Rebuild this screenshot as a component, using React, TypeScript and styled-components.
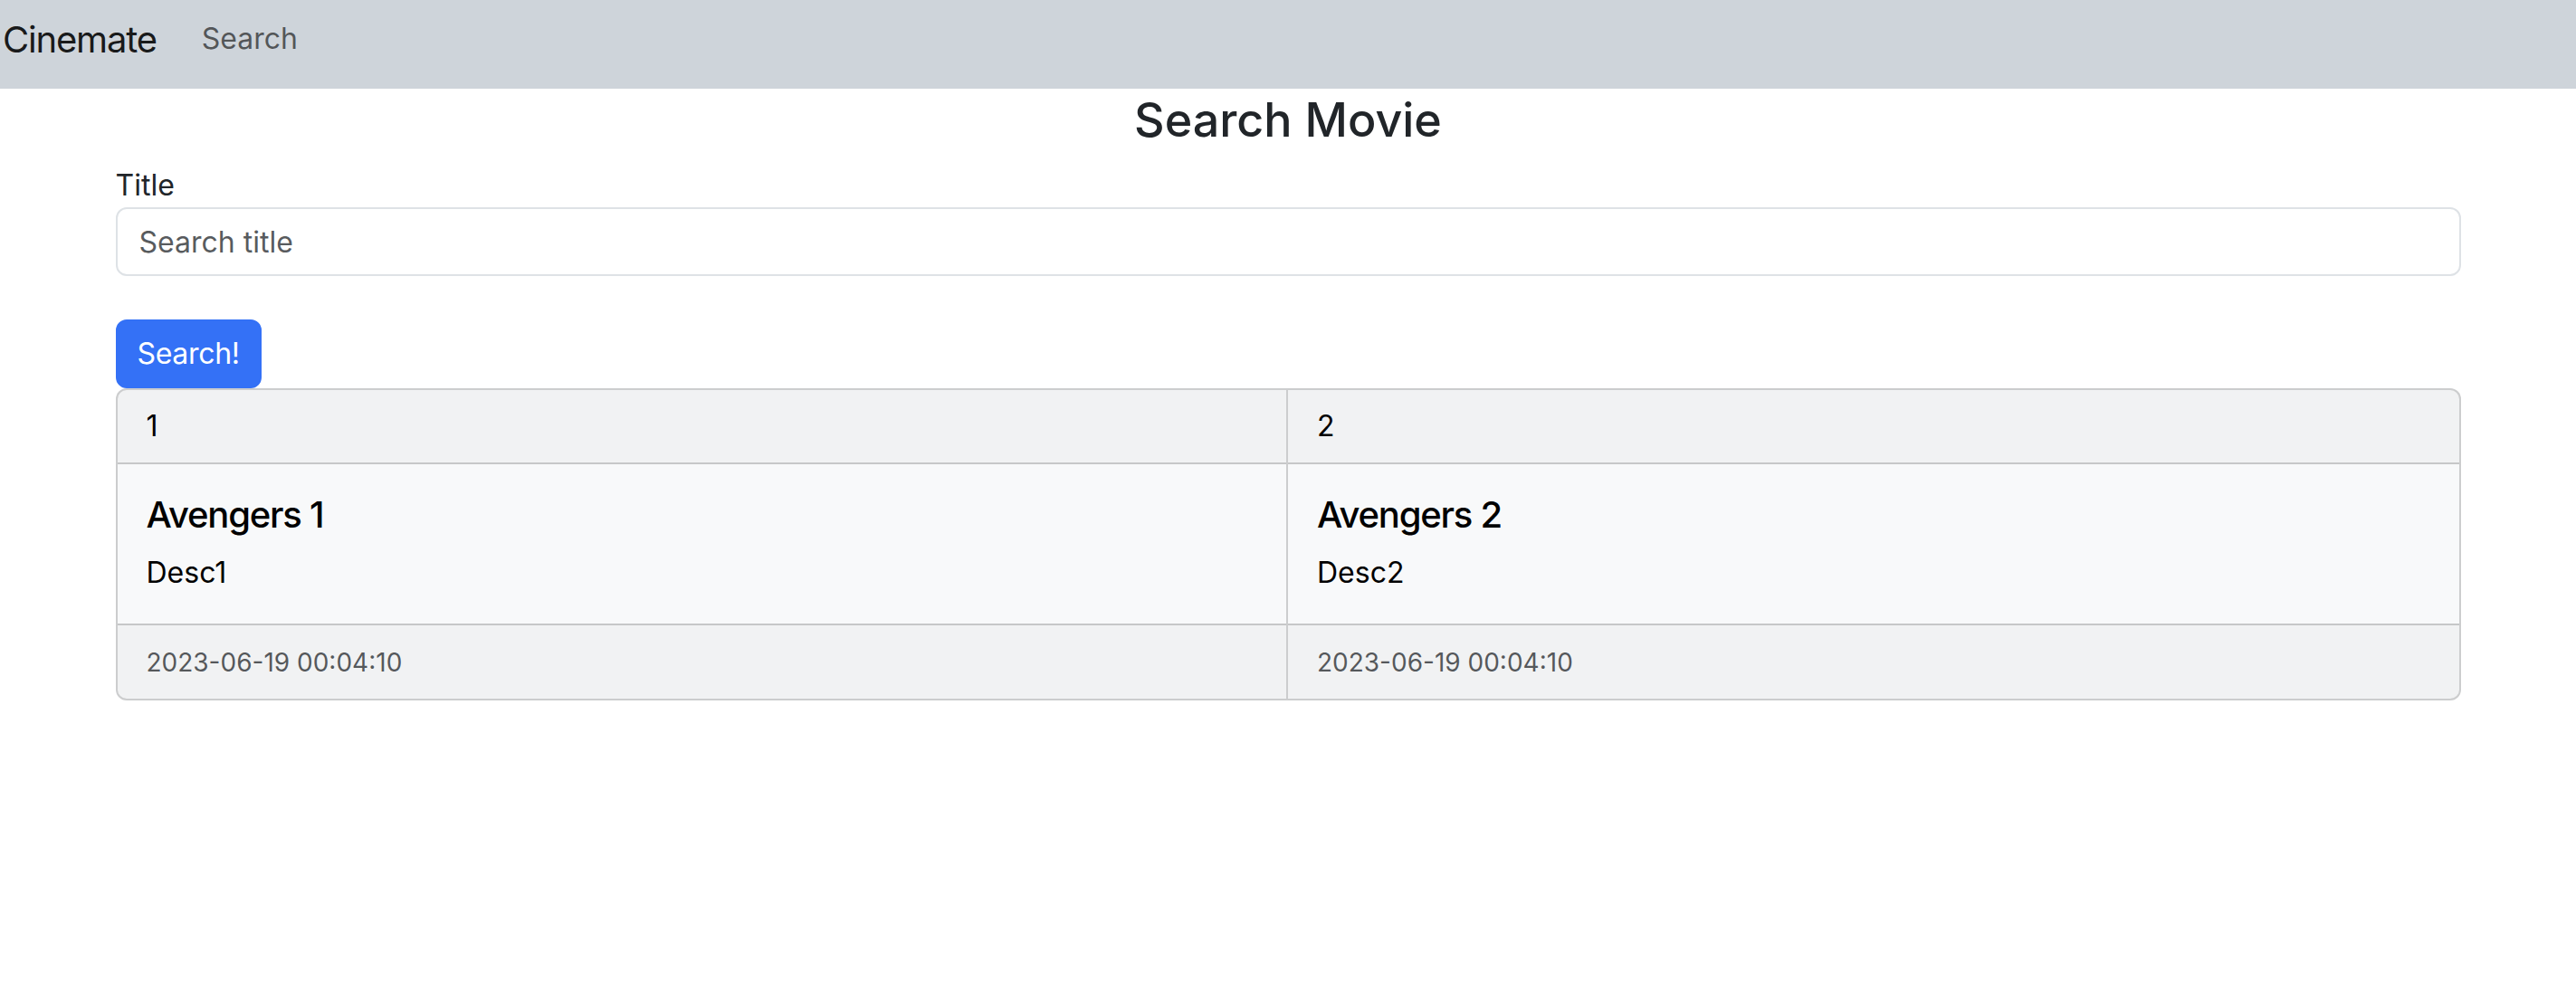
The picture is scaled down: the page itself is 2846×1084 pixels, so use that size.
import React from "react";
import styled, { createGlobalStyle } from "styled-components";

const GlobalStyle = createGlobalStyle`
  html, body {
    margin: 0;
    padding: 0;
    background: #ffffff;
  }
  body {
    font-family: Inter, "Noto Sans", "Liberation Sans", sans-serif;
    font-size: 32px;
    line-height: 1.5;
    color: #212529;
  }
  * { box-sizing: border-box; }
`;

const Navbar = styled.nav`
  display: flex;
  align-items: center;
  height: 98px;
  padding: 0 0 10px 3px;
  background: #ced4da;
`;

const Brand = styled.a`
  font-size: 40px;
  line-height: 60px;
  letter-spacing: -0.03em;
  color: rgba(0, 0, 0, 0.9);
  text-decoration: none;
  margin-right: 50px;
`;

const NavLink = styled.a`
  font-size: 32px;
  line-height: 48px;
  padding-bottom: 2px;
  color: rgba(0, 0, 0, 0.6);
  text-decoration: none;
`;

const Container = styled.main`
  width: 2591px;
  margin: 0 auto;
`;

const Heading = styled.h3`
  margin: 0 0 20px;
  padding-top: 7px;
  font-size: 52px;
  line-height: 56px;
  font-weight: 500;
  text-align: center;
  color: #212529;
`;

const Field = styled.div`
  display: flex;
  flex-direction: column;
  margin-bottom: 48px;
`;

const Label = styled.label`
  font-size: 32px;
  line-height: 48px;
  color: #212529;
`;

const Input = styled.input`
  display: block;
  width: 100%;
  height: 76px;
  padding: 12px 24px;
  font-family: inherit;
  font-size: 32px;
  line-height: 48px;
  color: #212529;
  background: #fff;
  border: 2px solid #dee2e6;
  border-radius: 12px;
  outline: none;
  &::placeholder {
    color: rgba(33, 37, 41, 0.75);
  }
`;

const Button = styled.button`
  display: block;
  height: 76px;
  padding: 12px 22px;
  font-family: inherit;
  font-size: 32px;
  line-height: 48px;
  letter-spacing: -0.01em;
  color: #fff;
  background: #3471f6;
  border: 2px solid #3471f6;
  border-radius: 12px;
  cursor: pointer;
`;

const CardGroup = styled.div`
  display: grid;
  grid-template-columns: 1fr 1fr;
`;

const Card = styled.div<{ $first?: boolean; $last?: boolean }>`
  display: flex;
  flex-direction: column;
  background: #f8f9fa;
  color: #000;
  border: 2px solid rgba(0, 0, 0, 0.175);
  border-left-width: ${(p) => (p.$first ? "2px" : "0")};
  border-radius: ${(p) =>
    p.$first ? "12px 0 0 12px" : p.$last ? "0 12px 12px 0" : "0"};
  overflow: hidden;
`;

const CardHeader = styled.div`
  padding: 16px 32px;
  font-size: 32px;
  line-height: 48px;
  background: rgba(33, 37, 41, 0.03);
  border-bottom: 2px solid rgba(0, 0, 0, 0.175);
`;

const CardBody = styled.div`
  flex: 1;
  padding: 32px;
`;

const CardTitle = styled.h5`
  margin: 0 0 16px;
  font-size: 40px;
  line-height: 48px;
  font-weight: 500;
  letter-spacing: -0.03em;
`;

const CardText = styled.p`
  margin: 0;
  font-size: 32px;
  line-height: 48px;
`;

const CardFooter = styled.div`
  padding: 16px 32px;
  font-size: 32px;
  line-height: 48px;
  background: rgba(33, 37, 41, 0.03);
  border-top: 2px solid rgba(0, 0, 0, 0.175);
`;

const Muted = styled.small`
  font-size: 28px;
  color: rgba(33, 37, 41, 0.75);
`;

const movies = [
  { id: 1, title: "Avengers 1", desc: "Desc1", date: "2023-06-19 00:04:10" },
  { id: 2, title: "Avengers 2", desc: "Desc2", date: "2023-06-19 00:04:10" },
];

export default function App() {
  return (
    <>
      <GlobalStyle />
      <Navbar>
        <Brand href="#">Cinemate</Brand>
        <NavLink href="#">Search</NavLink>
      </Navbar>
      <Container>
        <Heading>Search Movie</Heading>
        <Field>
          <Label htmlFor="title">Title</Label>
          <Input id="title" placeholder="Search title" />
        </Field>
        <Button type="button">Search!</Button>
        <CardGroup>
          {movies.map((m, i) => (
            <Card key={m.id} $first={i === 0} $last={i === movies.length - 1}>
              <CardHeader>{m.id}</CardHeader>
              <CardBody>
                <CardTitle>{m.title}</CardTitle>
                <CardText>{m.desc}</CardText>
              </CardBody>
              <CardFooter>
                <Muted>{m.date}</Muted>
              </CardFooter>
            </Card>
          ))}
        </CardGroup>
      </Container>
    </>
  );
}
